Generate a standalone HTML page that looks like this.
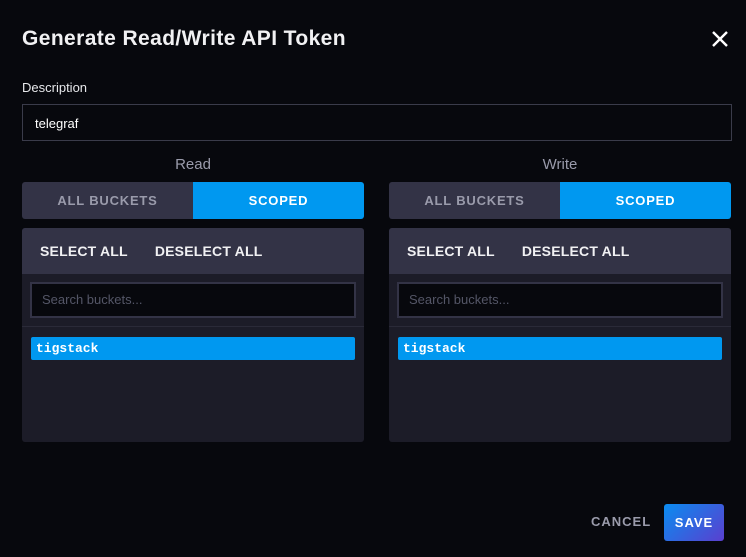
<!DOCTYPE html>
<html><head><style>
body{margin:0;width:746px;height:557px;background:#07080d;font-family:"Liberation Sans",sans-serif;position:relative;overflow:hidden;color:#e7e8eb}
.a{position:absolute}
.title{left:22px;top:27px;font-size:21px;font-weight:bold;color:#f1f1f3;letter-spacing:.4px}
.lbl{left:22px;top:80px;font-size:13px;color:#e7e8eb}
.desc{left:22px;top:104px;width:710px;height:37px;border:1px solid #3a3b4a;box-sizing:border-box;font-size:13px;padding:11px 12px;color:#fff}
.col{position:absolute;top:156px;width:342px}
.h{text-align:center;font-size:15px;color:#9a9bab;height:26px}
.tg{display:flex;height:37px;font-size:13px;font-weight:bold;letter-spacing:.8px}
.tg div{display:flex;align-items:center;justify-content:center}
.t1{width:171px;background:#333346;color:#9a9bab;border-radius:3px 0 0 3px}
.t2{flex:1;background:#0098f0;color:#fff;border-radius:0 3px 3px 0}
.pn{margin-top:9px;height:214px;background:#1c1c28;border-radius:3px;overflow:hidden}
.ph{height:46px;background:#333346;font-size:14px;font-weight:bold;letter-spacing:.2px;display:flex;align-items:center;padding-left:18px;color:#f1f1f3}
.ph span{margin-right:27px}
.sr{margin:8px 8px 0 8px;height:36px;border:2px solid #333346;background:#07080d;box-sizing:border-box;font-size:13px;color:#545667;padding:8px 10px}
.sep{margin-top:8px;height:1px;background:#2a2a38}
.it{margin:10px 9px 0 9px;height:23px;background:#0098f0;border-radius:2px;font-family:"Liberation Mono",monospace;font-weight:bold;font-size:13px;color:#fff;padding:4px 5px;box-sizing:border-box}
</style></head><body>
<div class="a title">Generate Read/Write API Token</div>
<svg class="a" style="left:711px;top:30px" width="18" height="18"><path d="M2 2L16 16M16 2L2 16" stroke="#fff" stroke-width="2.4"/></svg>
<div class="a lbl">Description</div>
<div class="a desc">telegraf</div>
<div class="col" style="left:22px"><div class="h">Read</div><div class="tg"><div class="t1">ALL BUCKETS</div><div class="t2">SCOPED</div></div>
<div class="pn"><div class="ph"><span>SELECT ALL</span><span>DESELECT ALL</span></div><div class="sr">Search buckets...</div><div class="sep"></div><div class="it">tigstack</div></div></div>
<div class="col" style="left:389px"><div class="h">Write</div><div class="tg"><div class="t1">ALL BUCKETS</div><div class="t2">SCOPED</div></div>
<div class="pn"><div class="ph"><span>SELECT ALL</span><span>DESELECT ALL</span></div><div class="sr">Search buckets...</div><div class="sep"></div><div class="it">tigstack</div></div></div>
<div class="a" style="left:591px;top:514px;font-size:13px;font-weight:bold;letter-spacing:1px;color:#9a9bab">CANCEL</div>
<div class="a" style="left:664px;top:504px;width:60px;height:37px;border-radius:3px;background:linear-gradient(135deg,#0a8cf0,#5a3fcf);display:flex;align-items:center;justify-content:center;font-size:13px;font-weight:bold;letter-spacing:1px;color:#fff">SAVE</div>
</body></html>
